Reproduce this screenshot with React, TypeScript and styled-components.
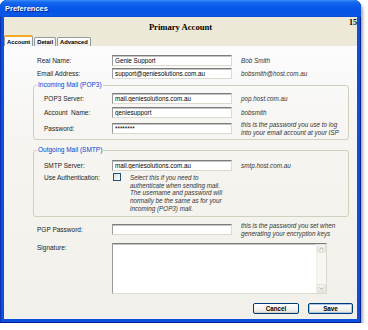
import React from "react";
import styled, { createGlobalStyle } from "styled-components";

const GlobalStyle = createGlobalStyle`
  html, body { margin: 0; padding: 0; background: #ffffff; }
  body { font-family: "Liberation Sans", Arial, sans-serif; }
  * { box-sizing: border-box; }
`;

const Window = styled.div`
  width: 361px;
  height: 323px;
  display: flex;
  flex-direction: column;
  background: #0b50dd;
  border-radius: 7px 7px 0 0;
  box-shadow: 2px 3px 3px rgba(0, 0, 0, 0.35), inset 0 -1px 0 #001f94,
    inset 1px 0 0 #0831b5, inset -1px 0 0 #00209a;
`;

const TitleBar = styled.div`
  height: 17px;
  flex: none;
  display: flex;
  align-items: center;
  padding: 0 0 1px 5px;
  border-radius: 7px 7px 0 0;
  background: linear-gradient(
    #3a8cf6 0%,
    #1468ef 15%,
    #0757e8 45%,
    #0554e6 70%,
    #0a58e4 90%,
    #0848d0 100%
  );
  color: #ffffff;
  font-size: 7.5px;
  font-weight: bold;
  text-shadow: 1px 1px 0 #0a1e8c;
`;

const Client = styled.div`
  flex: 1;
  min-height: 0;
  margin: 0 4px 4px;
  display: flex;
  flex-direction: column;
  background: #f3f2ec;
`;

const Header = styled.div`
  height: 29px;
  flex: none;
  display: flex;
  flex-direction: column;
  background: #ece9d8;
`;

const HeaderTop = styled.div`
  height: 18px;
  display: grid;
  grid-template-columns: 1fr auto 1fr;
`;

const Title = styled.div`
  grid-column: 2;
  padding-top: 1px;
  font-family: "Liberation Serif", "Times New Roman", serif;
  font-weight: bold;
  font-size: 8.6px;
  line-height: 18px;
  color: #000;
`;

const PageNo = styled.div`
  grid-column: 3;
  justify-self: end;
  padding-top: 2px;
  font-family: "Liberation Serif", "Times New Roman", serif;
  font-weight: bold;
  font-size: 8px;
  line-height: 8px;
  color: #000;
`;

const TabRow = styled.div`
  height: 11px;
  display: flex;
  align-items: flex-end;
  gap: 1px;
`;

const Tab = styled.div<{ $active?: boolean }>`
  height: ${(p) => (p.$active ? 11 : 9)}px;
  padding: 0 2px;
  display: flex;
  align-items: center;
  font-size: 5.8px;
  font-weight: bold;
  color: #000;
  border: 1px solid #919b9c;
  border-bottom: none;
  border-top: ${(p) => (p.$active ? "2px solid #f5a623" : "1px solid #919b9c")};
  border-radius: 2px 2px 0 0;
  background: ${(p) =>
    p.$active ? "#fcfcfe" : "linear-gradient(#ffffff, #ecebe6)"};
`;

const Form = styled.div`
  flex: 1;
  display: flex;
  flex-direction: column;
  padding: 9px 8px 0 29px;
  background: linear-gradient(#fcfcfe 0%, #f6f5f1 30%, #f1f0ea 100%);
`;

const Row = styled.div<{ $label: number; $indent: number; $mt?: number; $top?: boolean }>`
  display: grid;
  grid-template-columns: ${(p) => p.$label}px auto 1fr;
  align-items: ${(p) => (p.$top ? "start" : "center")};
  margin-top: ${(p) => p.$mt ?? 0}px;
  padding-left: ${(p) => p.$indent}px;
`;

const Label = styled.div<{ $pt?: number }>`
  padding-top: ${(p) => p.$pt ?? 0}px;
  font-size: 6.5px;
  line-height: 8px;
  color: #222;
  white-space: nowrap;
`;

const Field = styled.input`
  width: 120px;
  height: 11px;
  margin: 0;
  padding: 0 0 0 2px;
  border: 1px solid #dcd9cf;
  border-top-color: #7c7c7c;
  border-left-color: #9a9a9a;
  box-shadow: inset 0 1px 0 #c4c4c4;
  background: #ffffff;
  font-family: "Liberation Sans", Arial, sans-serif;
  font-size: 6.3px;
  color: #000;
  outline: none;
`;

const Hint = styled.div`
  padding-left: 9px;
  font-style: italic;
  font-size: 6.3px;
  line-height: 7.6px;
  color: #333;
  white-space: nowrap;
`;

const Group = styled.fieldset<{ $mt: number; $pt: number; $pb: number }>`
  margin: ${(p) => p.$mt}px 0 0 0;
  padding: ${(p) => p.$pt}px 0 ${(p) => p.$pb}px 0;
  min-width: 0;
  border: 1px solid #d0d0bf;
  border-radius: 3px;
  display: flex;
  flex-direction: column;
  gap: 3px;
`;

const Legend = styled.legend`
  margin-left: 3px;
  padding: 0 1px;
  font-size: 6.5px;
  line-height: 8px;
  color: #0046d5;
`;

const Check = styled.div`
  width: 8px;
  height: 8px;
  margin: -1px 0 0 1px;
  border: 1px solid #1c5180;
  background: linear-gradient(135deg, #dcdcd7, #ffffff);
`;

const SigBox = styled.div`
  grid-column: 2 / span 2;
  width: 215px;
  height: 51px;
  display: flex;
  border: 1px solid #dcd9cf;
  border-top-color: #7c7c7c;
  border-left-color: #9a9a9a;
  box-shadow: inset 0 1px 0 #c4c4c4;
  background: #ffffff;
`;

const SigText = styled.div`
  flex: 1;
`;

const ScrollBar = styled.div`
  width: 10px;
  display: flex;
  flex-direction: column;
  justify-content: space-between;
  background: #f7f6f2;
  border-left: 1px solid #f0efe9;
`;

const ArrowBtn = styled.div`
  width: 9px;
  height: 9px;
  display: flex;
  align-items: center;
  justify-content: center;
  border: 1px solid #e3e1d8;
  border-radius: 1px;
  background: linear-gradient(#f6f5f0, #e7e5dc);
`;

const ButtonRow = styled.div`
  display: flex;
  justify-content: flex-end;
  gap: 9px;
  margin: 9px -4px 0 0;
`;

const Button = styled.button<{ $w: number; $default?: boolean }>`
  width: ${(p) => p.$w}px;
  height: 11px;
  margin: 0;
  padding: 0;
  border: 1px solid #003c74;
  border-radius: 2px;
  background: linear-gradient(#ffffff 0%, #f4f4f0 55%, #e2dfd4 100%);
  box-shadow: ${(p) =>
    p.$default ? "inset 0 0 0 1px #a9c6f2" : "inset 0 -1px 0 #d6d0c5"};
  font-family: "Liberation Sans", Arial, sans-serif;
  font-size: 6.3px;
  font-weight: bold;
  line-height: 9px;
  color: #000;
`;

const Chevron = ({ down }: { down?: boolean }) => (
  <svg width="5" height="3" viewBox="0 0 5 3">
    <path
      d={down ? "M0.5 0.5 L2.5 2.5 L4.5 0.5" : "M0.5 2.5 L2.5 0.5 L4.5 2.5"}
      fill="none"
      stroke="#b0b0a8"
      strokeWidth="1"
    />
  </svg>
);

export default function App() {
  return (
    <>
      <GlobalStyle />
      <Window>
        <TitleBar>Preferences</TitleBar>
        <Client>
          <Header>
            <HeaderTop>
              <Title>Primary Account</Title>
              <PageNo>15</PageNo>
            </HeaderTop>
            <TabRow>
              <Tab $active>Account</Tab>
              <Tab>Detail</Tab>
              <Tab>Advanced</Tab>
            </TabRow>
          </Header>
          <Form>
            <Row $label={75} $indent={4}>
              <Label>Real Name:</Label>
              <Field readOnly defaultValue="Genie Support" />
              <Hint>Bob Smith</Hint>
            </Row>
            <Row $label={75} $indent={4} $mt={2}>
              <Label>Email Address:</Label>
              <Field readOnly defaultValue="support@geniesolutions.com.au" />
              <Hint>bobsmith@host.com.au</Hint>
            </Row>

            <Group $mt={2} $pt={4} $pb={3}>
              <Legend>Incoming Mail (POP3)</Legend>
              <Row $label={68} $indent={10}>
                <Label>POP3 Server:</Label>
                <Field readOnly defaultValue="mail.geniesolutions.com.au" />
                <Hint>pop.host.com.au</Hint>
              </Row>
              <Row $label={68} $indent={10}>
                <Label>Account&nbsp; Name:</Label>
                <Field readOnly defaultValue="geniesupport" />
                <Hint>bobsmith</Hint>
              </Row>
              <Row $label={68} $indent={10}>
                <Label>Password:</Label>
                <Field readOnly defaultValue="********" />
                <Hint>
                  this is the password you use to log
                  <br />
                  into your email account at your ISP
                </Hint>
              </Row>
            </Group>

            <Group $mt={6} $pt={6} $pb={4}>
              <Legend>Outgoing Mail (SMTP)</Legend>
              <Row $label={68} $indent={10}>
                <Label>SMTP Server:</Label>
                <Field readOnly defaultValue="mail.geniesolutions.com.au" />
                <Hint>smtp.host.com.au</Hint>
              </Row>
              <Row $label={68} $indent={10} $top>
                <Label>Use Authentication:</Label>
                <Check />
                <Hint>
                  Select this if you need to
                  <br />
                  authenticate when sending mail.
                  <br />
                  The username and password will
                  <br />
                  normally be the same as for your
                  <br />
                  incoming (POP3) mail.
                </Hint>
              </Row>
            </Group>

            <Row $label={75} $indent={4} $mt={5}>
              <Label>PGP Password:</Label>
              <Field readOnly defaultValue="" />
              <Hint>
                this is the password you set when
                <br />
                generating your encryption keys
              </Hint>
            </Row>
            <Row $label={75} $indent={4} $mt={6} $top>
              <Label $pt={1}>Signature:</Label>
              <SigBox>
                <SigText />
                <ScrollBar>
                  <ArrowBtn>
                    <Chevron />
                  </ArrowBtn>
                  <ArrowBtn>
                    <Chevron down />
                  </ArrowBtn>
                </ScrollBar>
              </SigBox>
            </Row>

            <ButtonRow>
              <Button $w={46}>Cancel</Button>
              <Button $w={45} $default>
                Save
              </Button>
            </ButtonRow>
          </Form>
        </Client>
      </Window>
    </>
  );
}
